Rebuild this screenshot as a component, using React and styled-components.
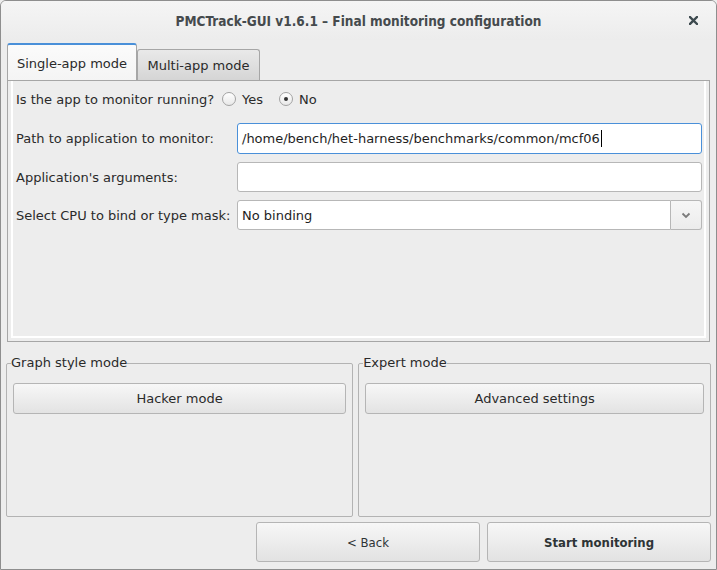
import React from 'react';
import styled, { createGlobalStyle } from 'styled-components';

const GlobalStyle = createGlobalStyle`
  html, body {
    margin: 0;
    padding: 0;
    background: #ededed;
  }
  * {
    box-sizing: border-box;
  }
`;

const Window = styled.div`
  width: 717px;
  height: 570px;
  border: 1px solid #8e8e8e;
  border-radius: 6px 6px 0 0;
  background: #ededed;
  display: flex;
  flex-direction: column;
  overflow: hidden;
  font-family: "DejaVu Sans", sans-serif;
  font-size: 13px;
  color: #2a2a2a;
`;

const TitleBar = styled.div`
  height: 39px;
  flex: none;
  position: relative;
  display: flex;
  align-items: center;
  justify-content: center;
  background: linear-gradient(#f5f5f5, #ececec);
  font-family: "DejaVu Sans Condensed", "DejaVu Sans", sans-serif;
  font-weight: bold;
  font-size: 13.5px;
  color: #454a4d;
`;

const CloseButton = styled.div`
  position: absolute;
  right: 18px;
  top: 15px;
  width: 9px;
  height: 9px;
  display: flex;
`;

const Body = styled.div`
  flex: 1;
  display: flex;
  flex-direction: column;
  padding: 4px 5px 6px 5px;
`;

const TabBar = styled.div`
  display: flex;
  align-items: flex-end;
  height: 36px;
  padding-left: 1px;
  position: relative;
  z-index: 1;
`;

const Tab = styled.div`
  height: ${p => (p.active ? '37px' : '31px')};
  width: ${p => p.width}px;
  display: flex;
  align-items: center;
  justify-content: center;
  padding-top: ${p => (p.active ? '2px' : '0')};
  border: 1px solid #a6a6a6;
  border-bottom: none;
  border-radius: 3px 3px 0 0;
  background: ${p => (p.active ? 'linear-gradient(#fbfbfb, #f4f4f4)' : 'linear-gradient(#e9e9e9, #d5d5d5)')};
  border-top: ${p => (p.active ? '2px solid #4a90d9' : '1px solid #a6a6a6')};
  color: #2a2a2a;
`;

const Pane = styled.div`
  height: 262px;
  border: 1px solid #a6a6a6;
  margin-left: 1px;
  margin-right: 1px;
  padding: 0 3px 3px 3px;
  background: #ededed;
  display: flex;
`;

const PaneInner = styled.div`
  flex: 1;
  border-left: 2px solid #ffffff;
  border-right: 2px solid #ffffff;
  border-bottom: 2px solid #ffffff;
  padding: 5px 2px 0 3px;
  display: flex;
  flex-direction: column;
`;

const RadioRow = styled.div`
  height: 22px;
  display: flex;
  align-items: center;
  margin-top: 2px;
`;

const RadioOption = styled.label`
  display: flex;
  align-items: center;
  margin-left: ${p => p.gap}px;
`;

const RadioCircle = styled.span`
  width: 14px;
  height: 14px;
  border-radius: 50%;
  border: 1px solid #a3a3a3;
  background: linear-gradient(#ffffff, #e8e8e8);
  display: flex;
  align-items: center;
  justify-content: center;
  margin-right: 6px;
  &::after {
    content: "";
    width: 4px;
    height: 4px;
    border-radius: 50%;
    background: ${p => (p.checked ? '#333' : 'transparent')};
  }
`;

const FieldRow = styled.div`
  display: grid;
  grid-template-columns: 221px 1fr;
  align-items: center;
  margin-top: ${p => p.top}px;
  height: ${p => p.h}px;
`;

const Input = styled.div`
  height: 100%;
  border: 1px solid ${p => (p.focused ? '#4a90d9' : '#b7b7b7')};
  border-radius: 3px;
  background: #fff;
  display: flex;
  align-items: center;
  padding-left: 4px;
  color: #1e1e1e;
`;

const Caret = styled.span`
  display: inline-block;
  width: 1px;
  height: 17px;
  background: #000;
  margin-left: 1px;
`;

const Combo = styled.div`
  height: 100%;
  display: flex;
`;

const ComboField = styled.div`
  flex: 1;
  border: 1px solid #b7b7b7;
  border-radius: 3px 0 0 3px;
  background: #fff;
  display: flex;
  align-items: center;
  padding-left: 4px;
  color: #1e1e1e;
`;

const ComboButton = styled.div`
  width: 31px;
  border: 1px solid #b7b7b7;
  border-left: none;
  border-radius: 0 3px 3px 0;
  background: linear-gradient(#f6f6f6, #ececec);
  display: flex;
  align-items: center;
  justify-content: center;
`;

const Groups = styled.div`
  display: flex;
  gap: 5px;
  margin-top: 13px;
`;

const Group = styled.fieldset`
  flex: ${p => p.grow};
  height: 162px;
  margin: 0;
  padding: 12px 6px 0 6px;
  border: 1px solid #b3b3b3;
  border-radius: 2px;
  min-width: 0;
`;

const GroupTitle = styled.legend`
  padding: 0;
  margin-left: -2px;
  color: #2a2a2a;
  line-height: 16px;
`;

const GroupButton = styled.div`
  height: 31px;
  border: 1px solid #b5b5b5;
  border-radius: 3px;
  background: linear-gradient(#f7f7f7, #e3e3e3);
  display: flex;
  align-items: center;
  justify-content: center;
  color: #2a2a2a;
`;

const Footer = styled.div`
  display: flex;
  justify-content: flex-end;
  gap: 7px;
  margin-top: 5px;
`;

const FooterButton = styled.div`
  width: ${p => p.width}px;
  height: 40px;
  border: 1px solid #b5b5b5;
  border-radius: 3px;
  background: linear-gradient(#f7f7f7, #e2e2e2);
  display: flex;
  align-items: center;
  justify-content: center;
  font-family: "DejaVu Sans Condensed", "DejaVu Sans", sans-serif;
  font-weight: ${p => (p.strong ? 'bold' : 'normal')};
  font-size: 13px;
  color: #2e3436;
`;

export default function App() {
  return (
    <>
      <GlobalStyle />
      <Window>
        <TitleBar>
          PMCTrack-GUI v1.6.1 – Final monitoring configuration
          <CloseButton>
            <svg width="9" height="9" viewBox="0 0 9 9">
              <path d="M1 1 L8 8 M8 1 L1 8" stroke="#3d4a4f" strokeWidth="2.4" strokeLinecap="square" />
            </svg>
          </CloseButton>
        </TitleBar>
        <Body>
          <TabBar>
            <Tab active width={130}>Single-app mode</Tab>
            <Tab width={123}>Multi-app mode</Tab>
          </TabBar>
          <Pane>
            <PaneInner>
              <RadioRow>
                Is the app to monitor running?
                <RadioOption gap={8}>
                  <RadioCircle />
                  Yes
                </RadioOption>
                <RadioOption gap={16}>
                  <RadioCircle checked />
                  No
                </RadioOption>
              </RadioRow>
              <FieldRow top={13} h={31}>
                <span>Path to application to monitor:</span>
                <Input focused>
                  /home/bench/het-harness/benchmarks/common/mcf06<Caret />
                </Input>
              </FieldRow>
              <FieldRow top={8} h={30}>
                <span>Application's arguments:</span>
                <Input />
              </FieldRow>
              <FieldRow top={8} h={30}>
                <span>Select CPU to bind or type mask:</span>
                <Combo>
                  <ComboField>No binding</ComboField>
                  <ComboButton>
                    <svg width="10" height="7" viewBox="0 0 10 7">
                      <path d="M1.5 1.5 L5 5 L8.5 1.5" fill="none" stroke="#7b7b7b" strokeWidth="1.8" />
                    </svg>
                  </ComboButton>
                </Combo>
              </FieldRow>
            </PaneInner>
          </Pane>
          <Groups>
            <Group grow={347}>
              <GroupTitle>Graph style mode</GroupTitle>
              <GroupButton>Hacker mode</GroupButton>
            </Group>
            <Group grow={353}>
              <GroupTitle>Expert mode</GroupTitle>
              <GroupButton>Advanced settings</GroupButton>
            </Group>
          </Groups>
          <Footer>
            <FooterButton width={224}>&lt; Back</FooterButton>
            <FooterButton width={224} strong>Start monitoring</FooterButton>
          </Footer>
        </Body>
      </Window>
    </>
  );
}
